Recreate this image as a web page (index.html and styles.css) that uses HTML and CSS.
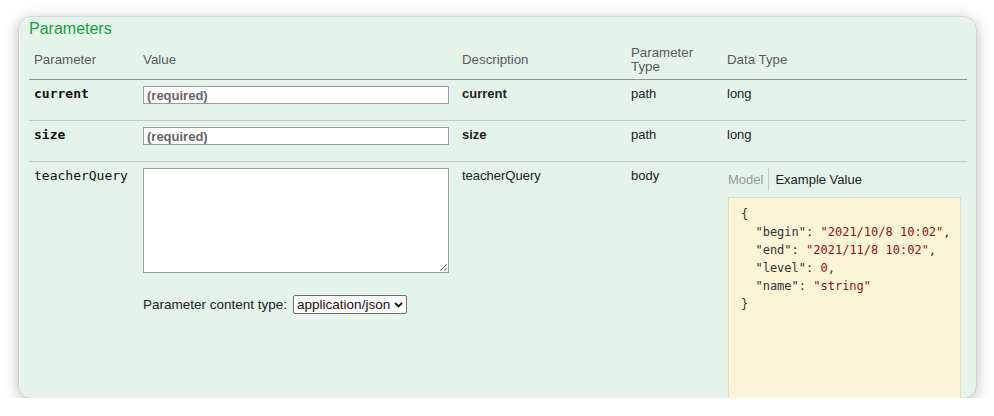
FILE: index.html
```html
<!DOCTYPE html>
<html lang="en">
<head>
<meta charset="utf-8">
<title>Parameters</title>
<link rel="stylesheet" href="styles.css">
</head>
<body>
<div class="card">
  <h4 class="title">Parameters</h4>
  <table class="params">
    <colgroup>
      <col class="c-name">
      <col class="c-value">
      <col class="c-desc">
      <col class="c-ptype">
      <col class="c-dtype">
    </colgroup>
    <thead>
      <tr>
        <th>Parameter</th>
        <th>Value</th>
        <th>Description</th>
        <th>Parameter<br>Type</th>
        <th>Data Type</th>
      </tr>
    </thead>
    <tbody>
      <tr>
        <td class="pname">current</td>
        <td><input class="req" type="text" placeholder="(required)"></td>
        <td class="desc strong">current</td>
        <td>path</td>
        <td>long</td>
      </tr>
      <tr>
        <td class="pname">size</td>
        <td><input class="req" type="text" placeholder="(required)"></td>
        <td class="desc strong">size</td>
        <td>path</td>
        <td>long</td>
      </tr>
      <tr class="last">
        <td class="pname normal">teacherQuery</td>
        <td>
          <textarea class="body-input"></textarea>
          <div class="ctype">
            <label>Parameter content type:</label>
            <span class="select-wrap">
              <select class="sel"><option>application/json</option></select>
              <svg class="chev" width="9" height="6" viewBox="0 0 9 6"><path d="M1 1l3.5 3.5L8 1" fill="none" stroke="#111" stroke-width="1.8"/></svg>
            </span>
          </div>
        </td>
        <td class="desc">teacherQuery</td>
        <td>body</td>
        <td>
          <div class="tabs">
            <span class="tab inactive">Model</span>
            <span class="tab active">Example Value</span>
          </div>
          <div class="snippet">
            <div class="ln">{</div>
            <div class="ln">  "begin": <span class="s">"2021/10/8 10:02"</span>,</div>
            <div class="ln">  "end": <span class="s">"2021/11/8 10:02"</span>,</div>
            <div class="ln">  "level": <span class="s">0</span>,</div>
            <div class="ln">  "name": <span class="s">"string"</span></div>
            <div class="ln">}</div>
          </div>
        </td>
      </tr>
    </tbody>
  </table>
</div>
</body>
</html>
```
FILE: styles.css
```css
html, body {
  margin: 0;
  padding: 0;
  background: #ffffff;
}

body {
  padding: 17px 18px 0 19px;
  font-family: "Liberation Sans", Arial, Helvetica, sans-serif;
}

.card {
  box-sizing: border-box;
  width: 957px;
  height: 381px;
  overflow: hidden;
  background: #e4f4ea;
  border-radius: 12px;
  padding: 2px 9px 0 10px;
  box-shadow: 0 0 0 0.5px rgba(0, 0, 0, 0.12), 0 3px 15px rgba(0, 0, 0, 0.3);
}

.title {
  margin: 0;
  font-size: 16px;
  line-height: 20px;
  font-weight: normal;
  color: #18a03f;
}

.params {
  width: 938px;
  table-layout: fixed;
  border-collapse: collapse;
  font-size: 13px;
  color: #222;
}

.c-name { width: 109px; }
.c-value { width: 319px; }
.c-desc { width: 169px; }
.c-ptype { width: 96px; }
.c-dtype { width: 245px; }

.params th {
  text-align: left;
  font-weight: normal;
  font-size: 13.3px;
  color: #5a5a5a;
  line-height: 14px;
  padding: 7px 5px 5px;
  vertical-align: middle;
  border-bottom: 1px solid #8e9490;
}

.params td {
  padding: 6px 5px 16px;
  vertical-align: top;
  line-height: 15px;
  border-bottom: 1px solid #c2c8c4;
}

.params tr.last td {
  border-bottom: none;
}

.pname {
  font-family: "DejaVu Sans Mono", "Liberation Mono", monospace;
  font-weight: bold;
  font-size: 13px;
  color: #111;
}

.pname.normal {
  font-weight: normal;
}

.desc.strong {
  font-weight: bold;
}

.req {
  box-sizing: border-box;
  display: block;
  width: 306px;
  height: 18px;
  margin: 0;
  padding: 0 3px;
  border: 1px solid #9c9c9c;
  background: #fff;
  font-family: "Liberation Sans", Arial, sans-serif;
  font-size: 13px;
  outline: none;
}

.req::placeholder {
  color: #666;
  font-weight: bold;
  opacity: 1;
}

.body-input {
  box-sizing: border-box;
  display: block;
  width: 306px;
  height: 105px;
  margin: 0;
  border: 1px solid #9c9c9c;
  background: #fff;
}

.ctype {
  margin-top: 22px;
  display: flex;
  align-items: center;
  gap: 6px;
  font-size: 13.5px;
  color: #222;
}

.select-wrap {
  position: relative;
  display: inline-block;
}

.sel {
  appearance: none;
  -webkit-appearance: none;
  box-sizing: border-box;
  width: 114px;
  height: 19px;
  margin: 0;
  padding: 0 14px 0 3px;
  border: 1px solid #6e6e6e;
  border-radius: 2px;
  background: #fff;
  color: #111;
  font-family: "Liberation Sans", Arial, sans-serif;
  font-size: 13.5px;
  line-height: 17px;
}

.chev {
  position: absolute;
  right: 4px;
  top: 7px;
  pointer-events: none;
}

.tabs {
  display: flex;
  align-items: stretch;
  height: 23px;
  padding-left: 1px;
}

.tab {
  display: flex;
  align-items: center;
  font-size: 13px;
}

.tab.inactive {
  color: #999;
  padding-right: 5px;
  border-right: 1px solid #c8ccc9;
}

.tab.active {
  color: #222;
  padding-left: 6px;
}

.snippet {
  box-sizing: border-box;
  width: 233px;
  height: 240px;
  margin: 6px 0 0 1px;
  padding: 8px 12px;
  background: #fbf4d6;
  border: 1px solid #e3dcbc;
  font-family: "DejaVu Sans Mono", "Liberation Mono", monospace;
  font-size: 12px;
  color: #333;
}

.ln {
  white-space: pre;
  height: 18px;
  line-height: 16px;
}

.snippet .s {
  color: #8f1111;
}
```
